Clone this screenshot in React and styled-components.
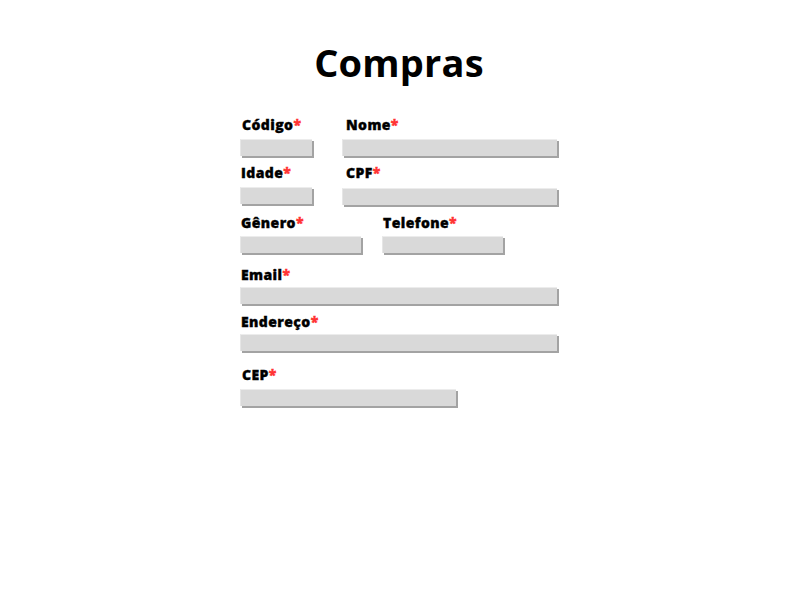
import React from "react";
import styled, { createGlobalStyle } from "styled-components";

const Global = createGlobalStyle`
  html, body { margin: 0; padding: 0; background: #fff; }
  body { font-family: "Open Sans", "Liberation Sans", sans-serif; color: #000; }
`;

const Page = styled.div`
  width: 800px;
  min-height: 600px;
  display: flex;
  flex-direction: column;
  align-items: center;
  padding-top: 36px;
  box-sizing: border-box;
`;

const Title = styled.h1`
  margin: 0 0 0 -2px;
  height: 52px;
  font-size: 38px;
  line-height: 52px;
  font-weight: 700;
  letter-spacing: 0.2px;
`;

const Form = styled.form`
  width: 320px;
  margin-top: 26px;
  display: flex;
  flex-direction: column;
`;

const Row = styled.div`
  display: flex;
  gap: ${(p) => p.$gap || 0}px;
  margin-top: ${(p) => p.$mt || 0}px;
`;

const Field = styled.div`
  display: flex;
  flex-direction: column;
  width: ${(p) => p.$w}px;
`;

const Label = styled.label`
  display: block;
  height: 19px;
  padding-top: 1px;
  font-size: 14px;
  line-height: 19px;
  font-weight: 800;
  letter-spacing: 0.4px;
  -webkit-text-stroke: 0.35px #000;
  padding-left: ${(p) => p.$indent || 1}px;
  margin-bottom: ${(p) => p.$mb || 6}px;
  white-space: nowrap;
`;

const Star = styled.span`
  color: #ff3333;
  -webkit-text-stroke: 0.35px #ff3333;
`;

const Input = styled.input`
  display: block;
  width: ${(p) => p.$w}px;
  height: 17px;
  box-sizing: border-box;
  margin: 0;
  padding: 0;
  border: none;
  border-top: 1px solid #ececec;
  border-left: 1px solid #e6e6e6;
  background: #d9d9d9;
  box-shadow: 2px 2px 0 #a3a3a3;
  outline: none;
`;

function F({ label, w, iw, indent, mb }) {
  return (
    <Field $w={w}>
      <Label $indent={indent} $mb={mb}>
        {label}
        <Star>*</Star>
      </Label>
      <Input $w={iw || w} />
    </Field>
  );
}

export default function App() {
  return (
    <>
      <Global />
      <Page>
        <Title>Compras</Title>
        <Form>
          <Row $gap={30}>
            <F label="Código" w={72} indent={2} mb={5} />
            <F label="Nome" w={215} indent={4} mb={5} />
          </Row>
          <Row $gap={30} $mt={6}>
            <F label="Idade" w={72} indent={1} mb={5} />
            <F label="CPF" w={215} indent={4} mb={6} />
          </Row>
          <Row $gap={21} $mt={7}>
            <F label="Gênero" w={121} indent={1} mb={4} />
            <F label="Telefone" w={121} indent={0} mb={4} />
          </Row>
          <Row $mt={11}>
            <F label="Email" w={317} indent={1} mb={3} />
          </Row>
          <Row $mt={7}>
            <F label="Endereço" w={317} indent={1} mb={3} />
          </Row>
          <Row $mt={13}>
            <F label="CEP" w={216} indent={2} mb={5} />
          </Row>
        </Form>
      </Page>
    </>
  );
}
